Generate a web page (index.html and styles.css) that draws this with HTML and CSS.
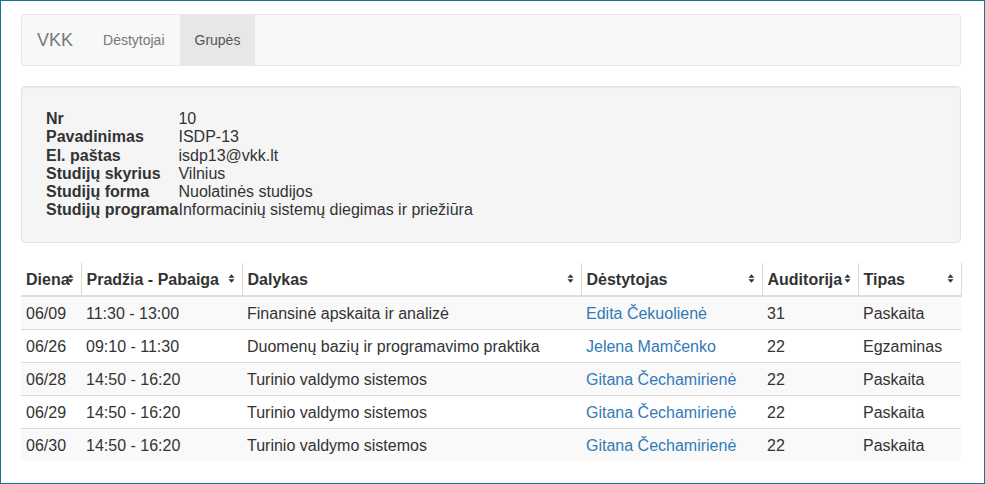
FILE: index.html
```html
<!DOCTYPE html>
<html lang="lt">
<head>
<meta charset="utf-8">
<title>VKK – Grupės</title>
<link rel="stylesheet" href="styles.css">
</head>
<body>
<div class="frame">
  <div class="container">
    <nav class="navbar">
      <a class="brand" href="#">VKK</a>
      <ul class="nav">
        <li><a href="#">Dėstytojai</a></li>
        <li class="active"><a href="#">Grupės</a></li>
      </ul>
    </nav>

    <div class="well">
      <dl class="info">
        <dt>Nr</dt><dd>10</dd>
        <dt>Pavadinimas</dt><dd>ISDP-13</dd>
        <dt>El. paštas</dt><dd>isdp13@vkk.lt</dd>
        <dt>Studijų skyrius</dt><dd>Vilnius</dd>
        <dt>Studijų forma</dt><dd>Nuolatinės studijos</dd>
        <dt>Studijų programa</dt><dd>Informacinių sistemų diegimas ir priežiūra</dd>
      </dl>
    </div>

    <table class="schedule">
      <colgroup>
        <col class="c1"><col class="c2"><col class="c3"><col class="c4"><col class="c5"><col class="c6">
      </colgroup>
      <thead>
        <tr>
          <th>Diena<svg class="sort" viewBox="0 0 7 9" width="7" height="9"><path d="M0.5 3.8 L3.5 0.3 L6.5 3.8 Z M0.5 5.2 L6.5 5.2 L3.5 8.7 Z"/></svg></th>
          <th>Pradžia - Pabaiga<svg class="sort" viewBox="0 0 7 9" width="7" height="9"><path d="M0.5 3.8 L3.5 0.3 L6.5 3.8 Z M0.5 5.2 L6.5 5.2 L3.5 8.7 Z"/></svg></th>
          <th>Dalykas<svg class="sort" viewBox="0 0 7 9" width="7" height="9"><path d="M0.5 3.8 L3.5 0.3 L6.5 3.8 Z M0.5 5.2 L6.5 5.2 L3.5 8.7 Z"/></svg></th>
          <th>Dėstytojas<svg class="sort" viewBox="0 0 7 9" width="7" height="9"><path d="M0.5 3.8 L3.5 0.3 L6.5 3.8 Z M0.5 5.2 L6.5 5.2 L3.5 8.7 Z"/></svg></th>
          <th>Auditorija<svg class="sort" viewBox="0 0 7 9" width="7" height="9"><path d="M0.5 3.8 L3.5 0.3 L6.5 3.8 Z M0.5 5.2 L6.5 5.2 L3.5 8.7 Z"/></svg></th>
          <th>Tipas<svg class="sort" viewBox="0 0 7 9" width="7" height="9"><path d="M0.5 3.8 L3.5 0.3 L6.5 3.8 Z M0.5 5.2 L6.5 5.2 L3.5 8.7 Z"/></svg></th>
        </tr>
      </thead>
      <tbody>
        <tr><td>06/09</td><td>11:30 - 13:00</td><td>Finansinė apskaita ir analizė</td><td><a href="#">Edita Čekuolienė</a></td><td>31</td><td>Paskaita</td></tr>
        <tr><td>06/26</td><td>09:10 - 11:30</td><td>Duomenų bazių ir programavimo praktika</td><td><a href="#">Jelena Mamčenko</a></td><td>22</td><td>Egzaminas</td></tr>
        <tr><td>06/28</td><td>14:50 - 16:20</td><td>Turinio valdymo sistemos</td><td><a href="#">Gitana Čechamirienė</a></td><td>22</td><td>Paskaita</td></tr>
        <tr><td>06/29</td><td>14:50 - 16:20</td><td>Turinio valdymo sistemos</td><td><a href="#">Gitana Čechamirienė</a></td><td>22</td><td>Paskaita</td></tr>
        <tr><td>06/30</td><td>14:50 - 16:20</td><td>Turinio valdymo sistemos</td><td><a href="#">Gitana Čechamirienė</a></td><td>22</td><td>Paskaita</td></tr>
      </tbody>
    </table>
  </div>
</div>
</body>
</html>
```

FILE: styles.css
```css
* { box-sizing: border-box; }

html, body {
  margin: 0;
  padding: 0;
  height: 100%;
}

body {
  font-family: "Liberation Sans", Arial, sans-serif;
  font-size: 14px;
  line-height: 20px;
  color: #333;
  background: #fff;
}

.frame {
  height: 100%;
  border: 1px solid #1a7392;
  padding-top: 13px;
}

.container {
  width: 940px;
  margin-left: 20px;
}

a { color: #337ab7; text-decoration: none; }

/* navbar */
.navbar {
  display: flex;
  height: 52px;
  background: #f8f8f8;
  border: 1px solid #e7e7e7;
  border-radius: 4px;
  margin-bottom: 20px;
}

.brand {
  display: block;
  padding: 15px;
  font-size: 18px;
  line-height: 20px;
  color: #777;
}

.nav {
  display: flex;
  list-style: none;
  margin: 0;
  padding: 0;
}

.nav a {
  display: block;
  padding: 15px;
  line-height: 20px;
  color: #777;
}

.nav .active a {
  background: #e7e7e7;
  color: #555;
}

/* well */
.well {
  background: #f5f5f5;
  border: 1px solid #e3e3e3;
  border-radius: 4px;
  box-shadow: inset 0 1px 1px rgba(0, 0, 0, .05);
  padding: 19px;
  height: 157px;
  margin-bottom: 20px;
}

.info {
  display: grid;
  grid-template-columns: max-content 1fr;
  margin: 0;
  padding: 4px 0 0 5px;
  font-size: 16px;
  line-height: 18.3px;
}

.info dt { font-weight: bold; }
.info dd { margin: 0; }

/* table */
.schedule {
  width: 940px;
  table-layout: fixed;
  border-collapse: collapse;
  font-size: 16px;
}

.c1 { width: 60px; }
.c2 { width: 161px; }
.c3 { width: 339px; }
.c4 { width: 181px; }
.c5 { width: 96px; }
.c6 { width: 103px; }

.schedule th,
.schedule td {
  padding: 6px 5px 4px;
  line-height: 22px;
  text-align: left;
  vertical-align: top;
  white-space: nowrap;
}

.schedule th {
  position: relative;
  font-weight: bold;
  border-right: 1px solid #dedac9;
  border-bottom: 2px solid #ddd;
}

.schedule td {
  border-top: 1px solid #ddd;
}

.schedule tbody tr:nth-child(odd) td {
  background: #f9f9f9;
}

.sort {
  position: absolute;
  right: 7px;
  top: 11px;
  fill: #333;
}
```
